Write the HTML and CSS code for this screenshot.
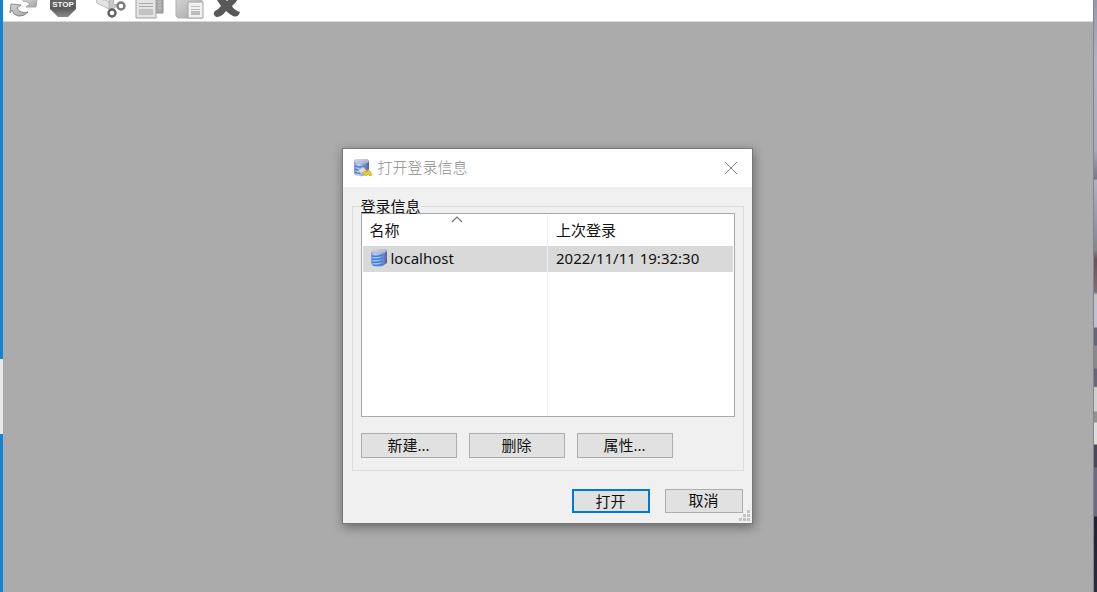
FILE: index.html
```html
<!DOCTYPE html>
<html lang="zh-cn">
  <head>
    <meta charset="UTF-8" />
    <meta name="viewport" content="width=device-width, initial-scale=1.0" />
    <title>打开登录信息</title>
    <link rel="stylesheet" href="styles.css" />
  </head>
  <body>
    <div class="edge-left"></div>
    <div class="app">
      <div class="toolbar">
        <svg width="250" height="21" viewBox="0 0 250 21" aria-hidden="true">
          <defs>
            <linearGradient id="dark" x1="0" y1="0" x2="0" y2="1">
              <stop offset="0" stop-color="#6c6c6c" />
              <stop offset=".6" stop-color="#5a5a5a" />
              <stop offset="1" stop-color="#8a8a8a" />
            </linearGradient>
            <linearGradient id="light" x1="0" y1="0" x2="1" y2="1">
              <stop offset="0" stop-color="#d5d5d5" />
              <stop offset="1" stop-color="#a5a5a5" />
            </linearGradient>
          </defs>
          <!-- 刷新 -->
          <path d="M7 13L8 4L18 5L14 8Q17 14 25 12Q21 17 15 16Q10 15 9 10Z" fill="url(#light)" stroke="#777" stroke-width=".8" />
          <path d="M20 -1H34L33 7L23 7L27 4Q24 1 20 1Z" fill="url(#light)" stroke="#999" stroke-width=".8" />
          <!-- 停止 -->
          <path d="M47 -5H73V9L65 17H55L47 9Z" fill="url(#dark)" />
          <text x="60" y="7" text-anchor="middle" class="stop-text">STOP</text>
          <!-- 剪切 -->
          <path d="M93 -1L94 3L108 10L111 6L103 0Z" fill="#e4e4e4" stroke="#aaa" stroke-width=".8" />
          <path d="M106 -1L106 9L110 9L115 5L110 4L111 -1Z" fill="#c9c9c9" stroke="#aaa" stroke-width=".8" />
          <circle cx="109" cy="13" r="3.500" fill="#fff" stroke="#616161" stroke-width="2.400" />
          <circle cx="118" cy="6" r="3.500" fill="#fff" stroke="#7c7c7c" stroke-width="2.400" />
          <!-- 复制 -->
          <path d="M142 -2H160V13H142Z" fill="#aaa" stroke="#8c8c8c" />
          <path d="M133 -1H153V18H133Z" fill="#e4e4e4" stroke="#a0a0a0" />
          <path d="M136 3.500H150M136 6.500H150" stroke="#aaa" />
          <path d="M136 9H150V15H136Z" fill="#c2c2c2" />
          <path d="M155 2H158M155 5H158M155 8H158" stroke="#c9c9c9" />
          <!-- 粘贴 -->
          <path d="M173 -2H199V18H175L173 16Z" fill="url(#light)" stroke="#b2b2b2" />
          <path d="M185 2H200V18H185Z" fill="#f1f1f1" stroke="#a4a4a4" />
          <path d="M188 6.500H197M188 9.500H197" stroke="#bbb" />
          <path d="M188 11H197V15H188Z" fill="#bcbcbc" />
          <!-- 删除 -->
          <path d="M212 -3H220L224 1L229 -3H236Q233 3 229 6Q231 10 237 12Q235 18 230 16Q226 14 223 11Q219 17 213 17Q209 14 212 11Q216 9 218 6Z" fill="#585858" />
        </svg>
      </div>
      <div class="workspace">
        <form class="dialog">
          <div class="title-bar">
            <svg width="20" height="20" viewBox="0 0 20 20" aria-hidden="true">
              <defs>
                <linearGradient id="db" x1="0" y1="0" x2="1" y2="0">
                  <stop offset="0" stop-color="#8797cf" />
                  <stop offset=".3" stop-color="#c4d4f3" />
                  <stop offset=".6" stop-color="#8fa4dc" />
                  <stop offset="1" stop-color="#555d98" />
                </linearGradient>
                <linearGradient id="lid" x1="0" y1="0" x2="1" y2="1">
                  <stop offset="0" stop-color="#d5d9ea" />
                  <stop offset="1" stop-color="#a0a8cc" />
                </linearGradient>
              </defs>
              <path d="M1 3Q1 1 6 1H12Q16 1 16 4V15Q11 19 6 18Q1 17 1 15Z" fill="url(#db)" />
              <path d="M1 3Q1 1 6 1H12Q16 1 16 3Q15 6 9 6Q2 6 1 3Z" fill="url(#lid)" />
              <path d="M2 8Q7 10 12 8M2 11Q6 13 9 11M2 14Q5 16 8 15" fill="none" stroke="#4a7fdd" stroke-width="1.500" />
              <path d="M5 12L10 9L14 13L9 17Z" fill="#dedede" stroke="#a5a5a5" stroke-width=".6" />
              <path d="M9 15L12 13L14 14L15 11L17 13L19 17L17 18L15 16L13 18Z" fill="#edcb22" stroke="#b59c29" stroke-width=".6" />
            </svg>
            <span class="title">打开登录信息</span>
            <button type="button" class="close" aria-label="关闭">
              <svg width="14" height="14" viewBox="0 0 14 14">
                <path d="M1 1L13 13M13 1L1 13" stroke="#888" fill="none" />
              </svg>
            </button>
          </div>
          <div class="content">
            <fieldset class="group">
              <legend>登录信息</legend>
              <div class="list">
                <table>
                  <thead>
                    <tr>
                      <th class="name">
                        <svg class="sort" width="12" height="7" viewBox="0 0 12 7" aria-hidden="true">
                          <path d="M1 6L6 1L11 6" fill="none" stroke="#777" stroke-width="1.200" />
                        </svg>
                        名称
                      </th>
                      <th>上次登录</th>
                    </tr>
                  </thead>
                  <tbody>
                    <tr class="selected">
                      <td>
                        <div class="server">
                          <svg width="18" height="20" viewBox="0 0 18 20" aria-hidden="true">
                            <path d="M1 4Q2 2 7 1H14Q17 1 17 4V15Q14 18 9 19Q3 19 1 16Z" fill="url(#db)" />
                            <path d="M1 4Q2 2 7 1H14Q17 1 17 3Q14 6 9 6Q3 6 1 4Z" fill="url(#lid)" />
                            <path d="M2 8Q7 9 13 7M2 11Q7 12 13 10M2 14Q7 15 13 13M3 17Q8 18 13 16" fill="none" stroke="#3480e2" stroke-width="1.600" />
                          </svg>
                          localhost
                        </div>
                      </td>
                      <td>2022/11/11 19:32:30</td>
                    </tr>
                    <tr class="blank">
                      <td></td>
                      <td></td>
                    </tr>
                  </tbody>
                </table>
              </div>
              <div class="actions">
                <button type="button">新建...</button>
                <button type="button">删除</button>
                <button type="button">属性...</button>
              </div>
            </fieldset>
            <div class="footer">
              <button type="button" class="primary">打开</button>
              <button type="button">取消</button>
            </div>
          </div>
          <svg class="grip" width="11" height="11" viewBox="0 0 11 11" aria-hidden="true">
            <path d="M8 0h3v3h-3zM4 4h3v3h-3zM8 4h3v3h-3zM0 8h3v3h-3zM4 8h3v3h-3zM8 8h3v3h-3z" fill="#c4c4c4" />
          </svg>
        </form>
      </div>
    </div>
    <div class="edge-right"></div>
  </body>
</html>
```
FILE: styles.css
```css
* {
  box-sizing: border-box;
}
body {
  display: flex;
  min-height: 100vh;
  margin: 0;
  overflow: hidden;
  font-family: "Noto Sans", "Noto Sans CJK SC", sans-serif;
  font-size: 15px;
  color: #111;
}
.edge-left {
  width: 3px;
  background: linear-gradient(#1583ce 359px, #e8e8e8 359px, #e8e8e8 434px, #1583ce 434px);
}
.edge-right {
  width: 4px;
  border-left: 1px solid #858589;
  background: linear-gradient(
    #9999a5 0, #b3b3bd 60px, #aaaab3 150px, #777781 179px,
    #b2b2bb 180px, #85858d 250px, #66545c 260px, #806d75 292px,
    #c1c1cc 295px, #c1c1cc 327px, #656872 328px, #656872 345px,
    #8b8990 346px, #8b8990 368px, #666975 369px, #666975 386px,
    #d0d0d0 388px, #d0d0d0 411px, #929292 412px, #929292 422px,
    #ddd 423px, #ddd 444px, #484b55 445px, #484b55 467px,
    #6b6c7d 468px, #6b6c7d 516px, #20242d 517px, #292e38 100%
  );
}
.app {
  flex: 1;
  display: flex;
  flex-direction: column;
}
.toolbar {
  height: 22px;
  background: #fff;
  border-bottom: 1px solid #d8d8d8;
}
.toolbar svg {
  display: block;
  overflow: visible;
}
.stop-text {
  font: bold 8px "Liberation Sans", sans-serif;
  fill: #f4f4f4;
}
.workspace {
  flex: 1;
  display: flex;
  justify-content: center;
  align-items: flex-start;
  padding: 126px 2px 0 0;
  background: #ababab;
}
.dialog {
  position: relative;
  width: 411px;
  border: 1px solid #777;
  background: #f0f0f0;
  box-shadow: 1px 3px 10px rgba(0, 0, 0, 0.4);
}
.title-bar {
  display: flex;
  align-items: center;
  gap: 5px;
  height: 38px;
  padding: 0 14px 0 10px;
  background: #fff;
}
.title {
  flex: 1;
  padding-bottom: 4px;
  font-weight: 300;
  color: #8c8c8c;
}
.close {
  display: flex;
  padding: 0;
  border: 0;
  background: none;
}
.content {
  padding: 12px 8px 10px 9px;
}
.group {
  min-width: 0;
  margin: 0;
  padding: 0 8px 12px;
  border: 1px solid #dcdcdc;
}
legend {
  padding: 0;
  line-height: 14px;
}
.list {
  border: 1px solid #a5a8ac;
  padding: 1px 1px 0;
  background: #fff;
}
table {
  width: 100%;
  border-collapse: collapse;
  table-layout: fixed;
}
th,
td {
  padding: 0 8px 2px;
  text-align: left;
  font-weight: 400;
}
th {
  position: relative;
  height: 31px;
}
th:first-child,
td:first-child {
  width: 185px;
  padding-left: 7px;
  border-right: 1px solid #e8eef5;
}
.sort {
  position: absolute;
  top: 1px;
  left: 88px;
}
.selected td {
  height: 26px;
  background: #d9d9d9;
}
.blank td {
  height: 144px;
}
.server {
  display: flex;
  align-items: center;
  gap: 3px;
}
.actions {
  display: flex;
  gap: 12px;
  margin-top: 16px;
}
.actions button {
  width: 96px;
}
.actions button,
.footer button {
  height: 25px;
  padding: 0 0 2px;
  border: 1px solid #adadad;
  background: #e1e1e1;
  font: inherit;
  line-height: 20px;
  color: #111;
}
.footer {
  display: flex;
  justify-content: flex-end;
  gap: 15px;
  margin-top: 18px;
  padding-right: 1px;
}
.footer button {
  width: 78px;
  height: 24px;
}
.footer .primary {
  border: 2px solid #0078d7;
}
.grip {
  position: absolute;
  right: 2px;
  bottom: 2px;
}
```
